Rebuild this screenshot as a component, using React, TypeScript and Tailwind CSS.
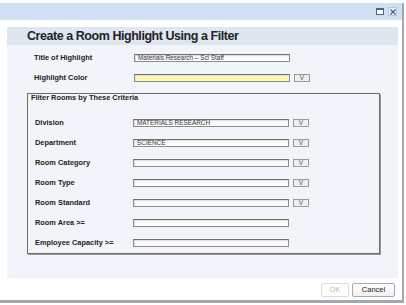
const font = "font-['Liberation_Sans',Arial,sans-serif]";

type Row = { label: string; value?: string; picker?: boolean; yellow?: boolean };

const topRows: Row[] = [
  { label: "Title of Highlight", value: "Materials Research – Sci Staff" },
  { label: "Highlight Color", yellow: true, picker: true },
];

const criteria: Row[] = [
  { label: "Division", value: "MATERIALS RESEARCH", picker: true },
  { label: "Department", value: "SCIENCE", picker: true },
  { label: "Room Category", picker: true },
  { label: "Room Type", picker: true },
  { label: "Room Standard", picker: true },
  { label: "Room Area >=" },
  { label: "Employee Capacity >=" },
];

function Field({ row }: { row: Row }) {
  return (
    <div className="flex items-center">
      <div
        className={`h-[8px] w-[156px] border border-[#8c8c8c] border-t-[#6f6f6f] shadow-[inset_1px_1px_0_#e0e0e0] px-[3px] text-[6.4px] leading-[6px] text-[#333] overflow-hidden whitespace-nowrap ${
          row.yellow ? "bg-[#fdf8b0]" : "bg-gradient-to-b from-[#f6f6f6] to-white"
        }`}
      >
        {row.value}
      </div>
      {row.picker ? (
        <div className="ml-[4px] flex h-[8px] w-[16px] items-center justify-center border border-[#9a9a9a] bg-[#efefef] text-[6.5px] leading-none text-[#555]">
          V
        </div>
      ) : null}
    </div>
  );
}

export default function App() {
  return (
    <div className={`h-[305px] w-[406px] overflow-hidden bg-white pt-[3px] ${font}`}>
      <div className="flex h-[300px] w-[404px] flex-col border-b-[3px] border-r-2 border-[#a3a8ae] bg-white">
        {/* title bar */}
        <div className="flex h-[17px] shrink-0 items-center justify-end gap-[4px] bg-[#cfe0f5] pr-[5px]">
          <div className="h-[7px] w-[8px] border border-t-2 border-[#4a6489] bg-white" />
          <div className="flex h-[9px] w-[9px] items-center justify-center bg-[#e4edf8] border border-[#b7c8de]">
            <svg width="6" height="6" viewBox="0 0 6 6">
              <path d="M0.5 0.5 L5.5 5.5 M5.5 0.5 L0.5 5.5" stroke="#4a6489" strokeWidth="1.2" />
            </svg>
          </div>
        </div>

        <div className="flex flex-1 flex-col pl-[7px] pr-[4px] pt-[7px]">
          <div className="flex h-[18px] items-center bg-[#dee6f0] pl-[20px]">
            <h1 className="text-[12.5px] font-bold tracking-[-0.45px] text-[#222]">
              Create a Room Highlight Using a Filter
            </h1>
          </div>

          <div className="h-[233px] bg-[#f1f5f9] pt-[3px]">
            {topRows.map((row) => (
              <div key={row.label} className="flex h-[20px] items-center pl-[27px]">
                <div className="w-[100px] text-[7.4px] font-bold text-[#222]">{row.label}</div>
                <Field row={row} />
              </div>
            ))}

            <div className="ml-[20px] mt-[5px] w-[353px] border border-[#6b6b6b] shadow-[1px_1px_0_#9a9a9a]">
              <div className="pl-[3px] text-[7.4px] font-bold leading-[8px] text-[#222]">
                Filter Rooms by These Criteria
              </div>
              <div className="mt-[11px]">
                {criteria.map((row) => (
                  <div key={row.label} className="flex h-[20px] items-center pl-[7px]">
                    <div className="w-[98px] text-[7.4px] font-bold text-[#222]">{row.label}</div>
                    <Field row={row} />
                  </div>
                ))}
              </div>
            </div>
          </div>

          <div className="flex justify-end gap-[3px] pr-[3px] pt-[5px]">
            <button className="h-[14px] w-[28px] rounded-[2px] border border-[#dcdcdc] bg-white text-[7.5px] text-[#b8b8b8]">
              OK
            </button>
            <button className="h-[14px] w-[43px] rounded-[2px] border border-[#a9a9a9] bg-gradient-to-b from-white to-[#f1f1f1] text-[7.5px] text-[#222]">
              Cancel
            </button>
          </div>
        </div>
      </div>
    </div>
  );
}
